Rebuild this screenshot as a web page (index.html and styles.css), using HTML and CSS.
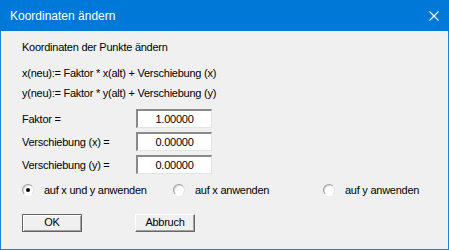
FILE: index.html
```html
<!DOCTYPE html>
<html lang="de">
<head>
<meta charset="UTF-8">
<title>Koordinaten ändern</title>
<link rel="stylesheet" href="styles.css">
</head>
<body>
  <div class="dialog">
    <div class="titlebar">
      <span class="title">Koordinaten ändern</span>
      <svg class="close" width="10" height="10" viewBox="0 0 10 10">
        <path d="M0.5 0.5 L9.5 9.5 M9.5 0.5 L0.5 9.5" stroke="#fff" stroke-width="1.1" fill="none"/>
      </svg>
    </div>
    <div class="content">
      <div class="line first">Koordinaten der Punkte ändern</div>
      <div class="line">x(neu):= Faktor * x(alt) + Verschiebung (x)</div>
      <div class="line">y(neu):= Faktor * y(alt) + Verschiebung (y)</div>

      <div class="form">
        <label>Faktor =</label>
        <div class="field">1.00000</div>
        <label>Verschiebung (x) =</label>
        <div class="field">0.00000</div>
        <label>Verschiebung (y) =</label>
        <div class="field">0.00000</div>
      </div>

      <div class="radios">
        <div class="radio"><span class="circle checked"></span>auf x und y anwenden</div>
        <div class="radio"><span class="circle"></span>auf x anwenden</div>
        <div class="radio"><span class="circle"></span>auf y anwenden</div>
      </div>

      <div class="buttons">
        <div class="btn default">OK</div>
        <div class="btn">Abbruch</div>
      </div>
    </div>
  </div>
</body>
</html>
```
FILE: styles.css
```css
body {
  margin: 0;
  font-family: "Liberation Sans", Arial, sans-serif;
  font-size: 11px;
  letter-spacing: -0.25px;
  color: #000;
}
.dialog {
  width: 449px;
  height: 250px;
  box-sizing: border-box;
  border: 1px solid #1883d7;
  background-color: #f0f0f0;
}
.titlebar {
  height: 30px;
  background-color: #0078d7;
  display: flex;
  align-items: center;
  justify-content: space-between;
  padding: 0 10px 0 9px;
  margin: -1px -1px 0 -1px;
  padding-top: 1px;
}
.title {
  color: #fff;
  font-size: 12px;
  letter-spacing: 0;
  margin-left: 1px;
}
.content {
  padding: 6px 21px 0 21px;
}
.line {
  height: 20px;
  line-height: 20px;
}
.line.first {
  margin-bottom: 6px;
}
.form {
  display: grid;
  grid-template-columns: 114px 76px;
  grid-auto-rows: 19px;
  row-gap: 4px;
  align-items: center;
  margin-top: 6px;
}
.field {
  height: 19px;
  box-sizing: border-box;
  background-color: #fff;
  border-top: 2px solid #8a8a8a;
  border-left: 2px solid #8a8a8a;
  border-right: 1px solid #e3e3e3;
  border-bottom: 1px solid #e3e3e3;
  text-align: center;
  line-height: 16px;
}
.radios {
  display: grid;
  grid-template-columns: 151px 150px 1fr;
  margin-top: 8px;
  height: 16px;
  align-items: center;
}
.radio {
  display: flex;
  align-items: center;
}
.circle {
  width: 12px;
  height: 12px;
  box-sizing: border-box;
  border-radius: 50%;
  border: 1px solid;
  border-color: #a0a0a0 #e3e3e3 #fff #a0a0a0;
  box-shadow: inset 1px 1px #d8d8d8;
  background-color: #fff;
  margin-right: 10px;
  position: relative;
}
.circle.checked::after {
  content: "";
  position: absolute;
  left: 3px;
  top: 3px;
  width: 4px;
  height: 4px;
  border-radius: 50%;
  background-color: #000;
}
.buttons {
  display: flex;
  gap: 53px;
  margin-top: 16px;
}
.btn {
  width: 60px;
  height: 18px;
  box-sizing: border-box;
  border-top: 1px solid #fff;
  border-left: 1px solid #fff;
  border-right: 1px solid #696969;
  border-bottom: 1px solid #696969;
  box-shadow: inset -1px -1px #a0a0a0;
  text-align: center;
  line-height: 15px;
}
.btn.default {
  border: 1px solid #646464;
  box-shadow: inset 1px 1px #fff, inset -1px -1px #a0a0a0;
}
```
